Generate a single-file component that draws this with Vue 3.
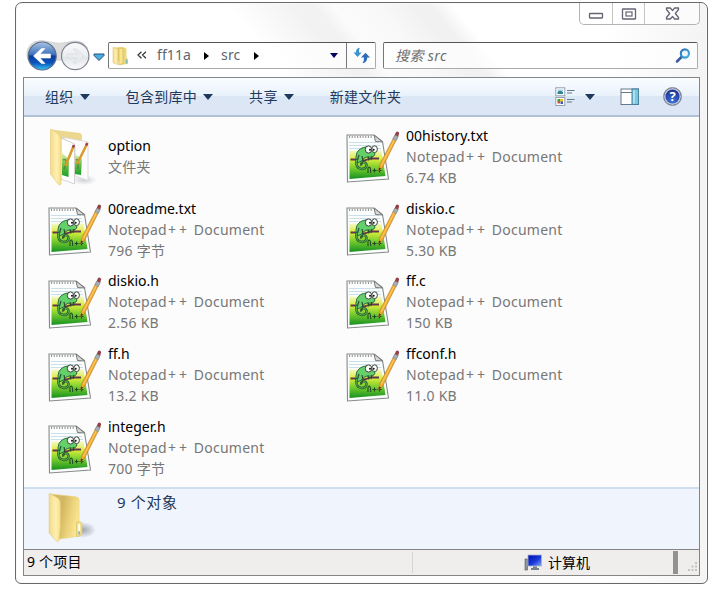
<script setup>
const files = [
  { name: 'option', lines: ['文件夹'], folder: true },
  { name: '00history.txt', lines: ['Notepad++ Document', '6.74 KB'] },
  { name: '00readme.txt', lines: ['Notepad++ Document', '796 字节'] },
  { name: 'diskio.c', lines: ['Notepad++ Document', '5.30 KB'] },
  { name: 'diskio.h', lines: ['Notepad++ Document', '2.56 KB'] },
  { name: 'ff.c', lines: ['Notepad++ Document', '150 KB'] },
  { name: 'ff.h', lines: ['Notepad++ Document', '13.2 KB'] },
  { name: 'ffconf.h', lines: ['Notepad++ Document', '11.0 KB'] },
  { name: 'integer.h', lines: ['Notepad++ Document', '700 字节'] },
]
const menus = [
  { label: '组织', arrow: true },
  { label: '包含到库中', arrow: true },
  { label: '共享', arrow: true },
  { label: '新建文件夹', arrow: false },
]
// "++" is set wider than the rest of the type name
const parts = (line) => line.split(/(\+\+)/)
</script>

<template>
  <div class="window">
    <svg class="defs" width="0" height="0" aria-hidden="true">
      <defs>
        <linearGradient id="blueBtn" x1="0" y1="0" x2="0" y2="1">
          <stop offset="0" stop-color="#a9c3e2" /><stop offset=".45" stop-color="#3c72bd" />
          <stop offset=".5" stop-color="#0a3c9c" /><stop offset=".75" stop-color="#0b55bd" /><stop offset="1" stop-color="#35c5f5" />
        </linearGradient>
        <linearGradient id="greyBtn" x1="0" y1="0" x2="0" y2="1">
          <stop offset="0" stop-color="#f8f9fa" /><stop offset=".5" stop-color="#eceef1" />
          <stop offset=".55" stop-color="#e2e5e8" /><stop offset="1" stop-color="#fbfbfc" />
        </linearGradient>
        <linearGradient id="folderFront" x1="0" y1="0" x2="1" y2="0">
          <stop offset="0" stop-color="#f3da8e" /><stop offset=".6" stop-color="#fff0b0" /><stop offset="1" stop-color="#f5dc84" />
        </linearGradient>
        <linearGradient id="folderBack" x1="0" y1="0" x2="1" y2=".3">
          <stop offset="0" stop-color="#d6bd6c" /><stop offset=".45" stop-color="#d2b662" /><stop offset=".75" stop-color="#ecd27a" /><stop offset="1" stop-color="#f9e592" />
        </linearGradient>
        <linearGradient id="grass" x1="0" y1="0" x2="0" y2="1">
          <stop offset="0" stop-color="#f3f9c8" /><stop offset=".3" stop-color="#dced3c" />
          <stop offset=".6" stop-color="#7ccf2e" /><stop offset="1" stop-color="#169022" />
        </linearGradient>
        <linearGradient id="miniGrass" x1="0" y1="0" x2="0" y2="1">
          <stop offset="0" stop-color="#e9f3b0" /><stop offset=".5" stop-color="#6cbf45" /><stop offset="1" stop-color="#17a02a" />
        </linearGradient>
        <linearGradient id="screen" x1="0" y1="0" x2="1" y2="1">
          <stop offset="0" stop-color="#0010b0" /><stop offset=".55" stop-color="#1838d8" /><stop offset="1" stop-color="#86aaf5" />
        </linearGradient>
        <linearGradient id="lens" x1="0" y1="0" x2="1" y2="1">
          <stop offset="0" stop-color="#2d6fb5" /><stop offset="1" stop-color="#43b4e0" />
        </linearGradient>
        <radialGradient id="shade"><stop offset="0" stop-color="#7d838c" stop-opacity=".7" /><stop offset="1" stop-color="#7d838c" stop-opacity="0" /></radialGradient>
      </defs>
    </svg>

    <header class="caption">
      <div class="caption-buttons">
        <button class="cap min" aria-label="min"><svg width="16" height="8" viewBox="0 0 16 8"><rect x="1.500" y="1.500" width="13" height="4.500" fill="#fff" stroke="#656575" stroke-width="1.300" rx=".5" /></svg></button>
        <button class="cap max" aria-label="max"><svg width="16" height="12" viewBox="0 0 16 12"><rect x="1.500" y="1" width="13" height="10" fill="#fff" stroke="#656575" stroke-width="1.300" rx=".5" /><rect x="5" y="4" width="6" height="4" fill="#fff" stroke="#656575" stroke-width="1.200" /></svg></button>
        <button class="cap close" aria-label="close"><svg width="15" height="13" viewBox="0 0 15 13"><path d="M1.500 1 H5.300 L7.500 3.500 L9.700 1 H13.500 V2.500 L10.300 6.500 L13.500 10.500 V12 H9.700 L7.500 9.500 L5.300 12 H1.500 V10.500 L4.700 6.500 L1.500 2.500 Z" fill="#fff" stroke="#656575" stroke-width="1.300" stroke-linejoin="round" /></svg></button>
      </div>
    </header>

    <nav class="address-row">
      <svg class="travel" width="82" height="32" viewBox="0 0 82 32">
        <path d="M9 2 Q16 -1 25 2 Q33 4.500 42 2.500 Q56 -2 62 7 L64 20 L3 20 Q-1 8 9 2Z" fill="#dcdcdd" stroke="#d1d2d4" />
        <circle cx="17.200" cy="16" r="14" fill="url(#blueBtn)" stroke="#5d6c88" stroke-width="1.200" />
        <path d="M8.500 16 L16.500 8.500 H20 L15 14 H25.500 V18 H15 L20 23.500 H16.500 Z" fill="#fff" stroke="#fff" stroke-width=".6" />
        <circle cx="50.200" cy="16" r="13.700" fill="url(#greyBtn)" stroke="#81858f" stroke-width="1.200" />
        <path d="M59 16 L51.500 9 H48 L52.500 14 H42 V18 H52.500 L48 23 H51.500 Z" fill="#e9ebed" stroke="#d8dbde" stroke-width=".7" />
        <path d="M69 14 H79 V15.500 L74 20.500 L69 15.500 Z" fill="#4badde" stroke="#27507f" />
      </svg>
      <div class="address">
        <svg class="mini-folder" width="17" height="20" viewBox="0 0 17 20">
          <path d="M1 1.500 L11 1 L14.500 2.500 V12 L16 13 V18 L8 19Z" fill="#ecd57c" />
          <path d="M1 1.500 L6 3 V18.500 L1 17Z" fill="url(#folderFront)" stroke="#dcc063" stroke-width=".5" />
          <path d="M7 2 L11 2.500 V17.500 L7 18.800Z" fill="#f8e68f" stroke="#d0b04e" stroke-width=".6" /><path d="M14.600 13.500 v4" stroke="#77b9bd" stroke-width="1.600" />
        </svg>
        <svg class="chev" width="10" height="8" viewBox="0 0 10 8"><path d="M4.500 .7 L1 4 L4.500 7.200 M9 .7 L5.500 4 L9 7.200" fill="none" stroke="#333" stroke-width="1.200" /></svg>
        <span class="crumb first">ff11a</span>
        <i class="tri-right"></i>
        <span class="crumb second">src</span>
        <i class="tri-right last"></i>
        <i class="tri-down navy"></i>
        <span class="refresh">
          <svg width="17" height="17" viewBox="0 0 17 17">
            <path d="M6.800 .8 Q2.800 1.500 2.800 5.500 H.5 L4.600 10 L8.700 5.500 H6 Q5.700 3 6.800 .8Z" fill="#3a93d0" />
            <path d="M9.500 16.300 Q14 15.500 14.300 10.500 H17 L12.500 5.800 L8 10.500 H11 Q11.200 14 9.500 16.300Z" fill="#2f6cb8" />
          </svg>
        </span>
      </div>
      <div class="search">
        <span>搜索 src</span>
        <svg width="16" height="16" viewBox="0 0 16 16"><path d="M2 13.500 L6.500 9" stroke="#3a5b9c" stroke-width="2.500" stroke-linecap="round" /><circle cx="9.900" cy="5.500" r="4.100" fill="#e9f6fc" stroke="url(#lens)" stroke-width="2.100" /></svg>
      </div>
    </nav>

    <main class="client">
      <div class="toolbar">
        <div v-for="m in menus" :key="m.label" class="menu">
          <span>{{ m.label }}</span><i v-if="m.arrow" class="tri-down"></i>
        </div>
        <div class="tools">
          <svg width="20" height="20" viewBox="0 0 20 20">
            <rect x=".8" y=".8" width="9" height="8" fill="#fff" stroke="#8d98a5" stroke-width=".9" /><path d="M2.500 5 L5 3 L8 5 V7 H2.500Z" fill="#2b8790" /><path d="M2.500 2.500h5.500v1.500H2.500z" fill="#a2ccec" />
            <rect x=".8" y="10.500" width="9" height="8" fill="#fff" stroke="#8d98a5" stroke-width=".9" /><path d="M2.500 12h3v3h-3z" fill="#3a9a39" /><path d="M5 12h3v3H5z" fill="#e8c62c" /><path d="M2.500 14.500h2.500v2H2.500z" fill="#de4c35" /><path d="M5.500 14.500h2.500v2.500H5.500z" fill="#3d56bd" />
            <path d="M12 3.500h7.500M12 6h5M12 12.500h7.500M12 15h5" stroke="#68798e" stroke-width="1.100" />
          </svg>
          <i class="tri-down"></i>
          <svg class="pane" width="20" height="18" viewBox="0 0 20 18"><rect x="1" y="1" width="17.500" height="15.500" fill="#fff" stroke="#64788e" /><path d="M1 4.500H12" stroke="#64788e" /><rect x="12" y="1" width="6.500" height="15.500" fill="#7bc8e0" stroke="#487f9a" /><path d="M14 2v13.500" stroke="#bdeaf5" stroke-width="1.500" /></svg>
          <span class="help">?</span>
        </div>
      </div>

      <section class="files">
        <article v-for="f in files" :key="f.name" class="file">
          <svg v-if="f.folder" class="file-icon" width="56" height="60" viewBox="0 0 56 60">
            <ellipse cx="36" cy="53" rx="13" ry="5" fill="url(#shade)" opacity=".5" />
            <path d="M3 2.500 L32 6 Q34 6.500 34 9 V46 L12 51Z" fill="#ecd78e" />
            <path d="M14 10 L40 15 V53.500 L27 49 V20Z" fill="#fcfcfc" stroke="#d4d4d4" stroke-width=".8" />
            <path d="M27 27 L34 32 L33 48 L27 47Z" fill="url(#miniGrass)" />
            <path d="M28 33 Q31 32 30 37 V42" fill="none" stroke="#4d7f43" stroke-width="1.500" opacity=".8" />
            <path d="M29 37 L38.500 18" stroke="#d99a2b" stroke-width="2.500" /><path d="M38.200 18.500 L39.200 16" stroke="#9b3b42" stroke-width="2.500" />
            <path d="M13 11 L26.500 17 V57 L13 52Z" fill="#fff" stroke="#c8c8c8" stroke-width=".8" />
            <path d="M14 26 L21 32 L20.500 50 L14 48Z" fill="url(#miniGrass)" />
            <path d="M15 33 Q19 31 18 37 L16 42" fill="none" stroke="#4d7f43" stroke-width="1.500" opacity=".8" />
            <path d="M17.500 39 L25.200 20" stroke="#d99a2b" stroke-width="2.500" /><path d="M25 20.500 L26 18" stroke="#9b3b42" stroke-width="2.500" />
            <path d="M2.500 3 Q2.500 1.500 4 2.500 L11 8 Q13 10 13 14 V57 Q12 59 10 57 L2.500 47Z" fill="url(#folderFront)" stroke="#e8cf80" stroke-width=".7" />
          </svg>
          <svg v-else class="file-icon" width="56" height="60" viewBox="0 0 56 60">
            <path d="M1 8 H28 L36.500 14.500 L42.500 52 L1.500 55Z" fill="#fcfdfd" stroke="#858b89" stroke-width="1.100" />
            <path d="M3 15.500 H33 M3 18.500 H34 M3 21.500 H35" stroke="#cadfe9" stroke-width="1" />
            <path d="M3.500 23.500 H35.500 L39.500 49 L3.500 52Z" fill="url(#grass)" />
            <path d="M28 8 L36.500 15 L29.500 14.500Z" fill="#dadada" stroke="#777" stroke-width="1" />
            <path d="M3 9.800 H27" stroke="#999" stroke-width="2.600" stroke-dasharray="1.100 1.600" />
            <path d="M4.500 32.500 H12 L18 33.500 L25 31.500 H33" fill="none" stroke="#63364f" stroke-width="1.800" />
            <path d="M29 27 Q28 31 21 30 Q17 31 15.500 34 L11.500 36 Q8.500 30 11 25.500 Q14 20.500 20 20 Q26 21 29 27Z" fill="#63d06a" stroke="#2e6a3c" stroke-width="1" />
            <path d="M10.500 33 Q9.500 41.500 15.500 42 Q20.500 42 20.500 38 Q20 34.800 17 35.300 Q14.500 36 15.500 38.500" fill="none" stroke="#2e6331" stroke-width="2.600" />
            <path d="M10.500 33 Q9.500 41.500 15.500 42 Q20.500 42 20.500 38 Q20 34.800 17 35.300" fill="none" stroke="#5cb84b" stroke-width=".9" />
            <path d="M13 28 l-1.500 5 M16 29 l1 5 M22 29.500 l1 4 M26 29 l-1 4" stroke="#2a4d2c" stroke-width="1.200" />
            <ellipse cx="22.500" cy="22.500" rx="3.200" ry="3.600" fill="#fff" stroke="#3a443a" stroke-width="1" /><ellipse cx="28.600" cy="22.200" rx="2.800" ry="3.400" fill="#fff" stroke="#3a443a" stroke-width="1" />
            <circle cx="24" cy="22.700" r="1" fill="#111" /><circle cx="27.700" cy="22.700" r="1" fill="#111" />
            <path d="M22 46 V41 Q24.500 37.500 24.800 46 M26.500 43.500 h4 M28.500 41.500 v4 M31.500 43.500 h4 M33.500 41.500 v4" fill="none" stroke="#204a22" stroke-width="1.100" />
            <path d="M32.500 44 L33.500 38 L49 8 L52 9.500 L36.500 40.500Z" fill="#f0a82e" stroke="#b98233" stroke-width=".6" />
            <path d="M35.300 38.500 L50 9.500" stroke="#ffd165" stroke-width="1" /><path d="M32.500 44 L33.200 40.500 L35 41.500Z" fill="#343126" />
            <path d="M46.800 12 L48.800 8 L52.200 9.500 L50.200 13.700Z" fill="#a3adb5" stroke="#7d8086" stroke-width=".5" /><path d="M48.800 8 L50 5 Q52 3.500 53.200 6 L52.200 9.500Z" fill="#94404a" />
          </svg>
          <div class="file-text">
            <div class="name">{{ f.name }}</div>
            <div v-for="l in f.lines" :key="l" class="meta"><span v-for="(p, i) in parts(l)" :key="i" :class="{ plus: p === '++' }">{{ p }}</span></div>
          </div>
        </article>
      </section>

      <section class="details">
        <svg class="big-folder" width="48" height="54" viewBox="0 0 48 54">
          <ellipse cx="35" cy="38" rx="13" ry="8" fill="url(#shade)" />
          <path d="M2 2 L26 4.500 Q31 5 31 7 V30 L32 44 L11 47 V12 Z" fill="url(#folderBack)" stroke="#e9d17e" stroke-width=".6" />
          <path d="M28.500 30 h4 q1.500 0 1.500 2 v10 q-1 2-5.500 2.500z" fill="#f4e08a" stroke="#d9bd62" stroke-width=".6" />
          <path d="M31.200 32 v7" stroke="#fff" stroke-width="1.800" /><path d="M31.200 39.500 v3" stroke="#80b6d6" stroke-width="1.800" />
          <path d="M1.200 2.500 Q1.200 1 2.500 1.700 L10.500 6.500 Q12.500 8.500 12.500 12 V35 L11 48.500 Q10 50.500 8.500 49 L1.200 41 Z" fill="url(#folderFront)" stroke="#e3c873" stroke-width=".7" />
        </svg>
        <span>9 个对象</span>
      </section>

      <footer class="status">
        <span class="count">9 个项目</span>
        <div class="zone">
          <svg width="18" height="17" viewBox="0 0 18 17"><rect x="1" y="5" width="2.500" height="11" fill="#8f969d" stroke="#4e535c" stroke-width=".6" /><rect x="4" y="1" width="13.500" height="11" fill="url(#screen)" stroke="#a5b3c8" stroke-width=".8" /><path d="M9 12.400h4v1.600h2v2H7v-2h2z" fill="#747f89" /></svg>
          <span>计算机</span>
        </div>
        <i class="bar"></i>
        <svg class="grip" width="10" height="10" viewBox="0 0 10 10"><path d="M7 0h2v2H7zM3.500 3.500h2v2h-2zM7 3.500h2v2H7zM0 7h2v2H0zM3.500 7h2v2h-2zM7 7h2v2H7z" fill="#c4c2c2" /></svg>
      </footer>
    </main>
  </div>
</template>

<style>
body { margin: 0; background: #fff; }
</style>

<style scoped>
* { box-sizing: border-box; }
.window {
  width: 693px; height: 582px; margin: 2px 0 0 15px; padding: 0 7px 7px;
  border: 1px solid #686868; border-radius: 7px 7px 6px 6px;
  background: linear-gradient(51deg, transparent 36%, #f2f2f2 45% 47.5%, #fbfbfb 50%, #f8f8f8 56%, #f1f1f1 61% 63%, transparent 66%) 0 0 / 100% 76px no-repeat, linear-gradient(90deg, #fff 85%, #f4f4f4);
  box-shadow: inset 0 0 0 1px #fafafa;
  display: flex; flex-direction: column;
  font: 14px/21px "Noto Sans", "Noto Sans CJK SC", sans-serif;
}
.defs { position: absolute; }
svg { display: block; flex: none; }
.caption { height: 36px; display: flex; justify-content: flex-end; align-items: flex-start; flex: none; }
.caption-buttons { display: flex; width: 121px; height: 22px; border: 1px solid #b4b4b4; border-top: 0; border-radius: 0 0 5px 5px; background: rgba(255,255,255,.6); }
.cap { padding: 0; border: 0; border-right: 1px solid #c4c4c4; background: transparent; display: flex; align-items: center; justify-content: center; }
.min { width: 33px; padding-top: 5px; }
.max { width: 32px; }
.close { flex: 1; border-right: 0; }
.address-row { height: 38px; display: flex; align-items: flex-start; flex: none; padding-left: 2px; }
.travel { margin-top: 1px; }
.address { width: 268px; height: 27px; margin: 3px 0 0 1px; border: 1px solid #aaa; border-top-color: #555; border-left-color: #777; border-radius: 2px; background: rgba(255,255,255,.7); display: flex; align-items: center; }
.address .crumb { margin-top: -2px; }
.mini-folder { margin-left: 3px; }
.chev { margin: -2px 0 0 8px; }
.crumb { color: #5c6570; }
.address .first { width: 35px; margin-left: 10px; letter-spacing: .1px; }
.tri-right { margin-left: 12px; border: 4.5px solid transparent; border-left: 5px solid #000; border-right: 0; }
.address .second { width: 21px; margin-left: 12px; letter-spacing: .2px; }
.tri-down { border: 5px solid transparent; border-top: 6px solid #1e395b; border-bottom: 0; }
.navy { margin-left: auto; margin-right: 8px; border-top-color: #00005c; border-top-width: 5px; border-left-width: 4px; border-right-width: 4px; }
.refresh { width: 29px; height: 25px; border-left: 1px solid #777; display: grid; place-items: center; }
.search { width: 315px; height: 27px; margin: 3px 0 0 7px; padding: 0 6px 0 11px; border: 1px solid #aaa; border-top-color: #555; border-left-color: #777; border-radius: 2px; background: rgba(255,255,255,.7); display: flex; align-items: center; justify-content: space-between; color: #6e6e6e; font-style: italic; letter-spacing: .4px; }
.client { width: 677px; height: 499px; border: 1px solid #858585; display: flex; flex-direction: column; background: #fcfcfc; flex: none; }
.toolbar { height: 39px; padding: 0 9px 0 21px; display: flex; align-items: center; flex: none; background: linear-gradient(#fafdff, #e9f2fb 48%, #dce7f5 50%, #dce6f4); border-bottom: 2px solid #b2c2d6; color: #1e395b; }
.menu { display: flex; align-items: center; gap: 6px; margin-right: 36px; letter-spacing: .3px; }
.tools { display: flex; align-items: center; margin-left: auto; }
.tools .tri-down { margin-left: 10px; }
.pane { margin-left: 25px; }
.help { width: 19px; height: 19px; margin: 0 8px 0 23px; border-radius: 50%; border: 1px solid #858b94; box-shadow: inset 0 0 0 1.5px #c0c5d0; background: radial-gradient(circle at 50% 80%, #3b74db, #1f3a9b 65%); color: #fff; font: bold 13px/17px "Noto Sans", sans-serif; text-align: center; }
.files { height: 370px; padding: 4px 0 0 24px; display: grid; grid-template-columns: 298px 298px; grid-auto-rows: 72.75px; flex: none; }
.file { display: flex; align-items: center; }
.file-icon { margin-right: 4px; }
.file-text { white-space: nowrap; margin-top: -2px; }
.name { color: #000; }
.meta { color: #777; letter-spacing: .25px; }
.plus { letter-spacing: 3px; margin-left: 1px; }
.details { height: 62px; flex: none; display: flex; background: #f0f4fc; border-top: 2px solid #cfdfef; color: #1e395b; padding: 3px 0 0 24px; }
.details span { margin-left: 21px; font-size: 15px; letter-spacing: .6px; }
.status { flex: 1; border-top: 1px solid #858585; background: #f0eded; color: #000; display: flex; align-items: center; padding-left: 3px; }
.count { width: 386px; height: 21px; border-right: 1px solid #d7d4d4; line-height: 19px; letter-spacing: .2px; }
.zone { width: 113px; height: 21px; margin-left: 111px; display: flex; align-items: center; gap: 6px; white-space: nowrap; line-height: 19px; }
.bar { width: 5px; height: 23px; background: #929292; margin-left: 36px; }
.grip { margin: 9px 0 0 10px; }
</style>
